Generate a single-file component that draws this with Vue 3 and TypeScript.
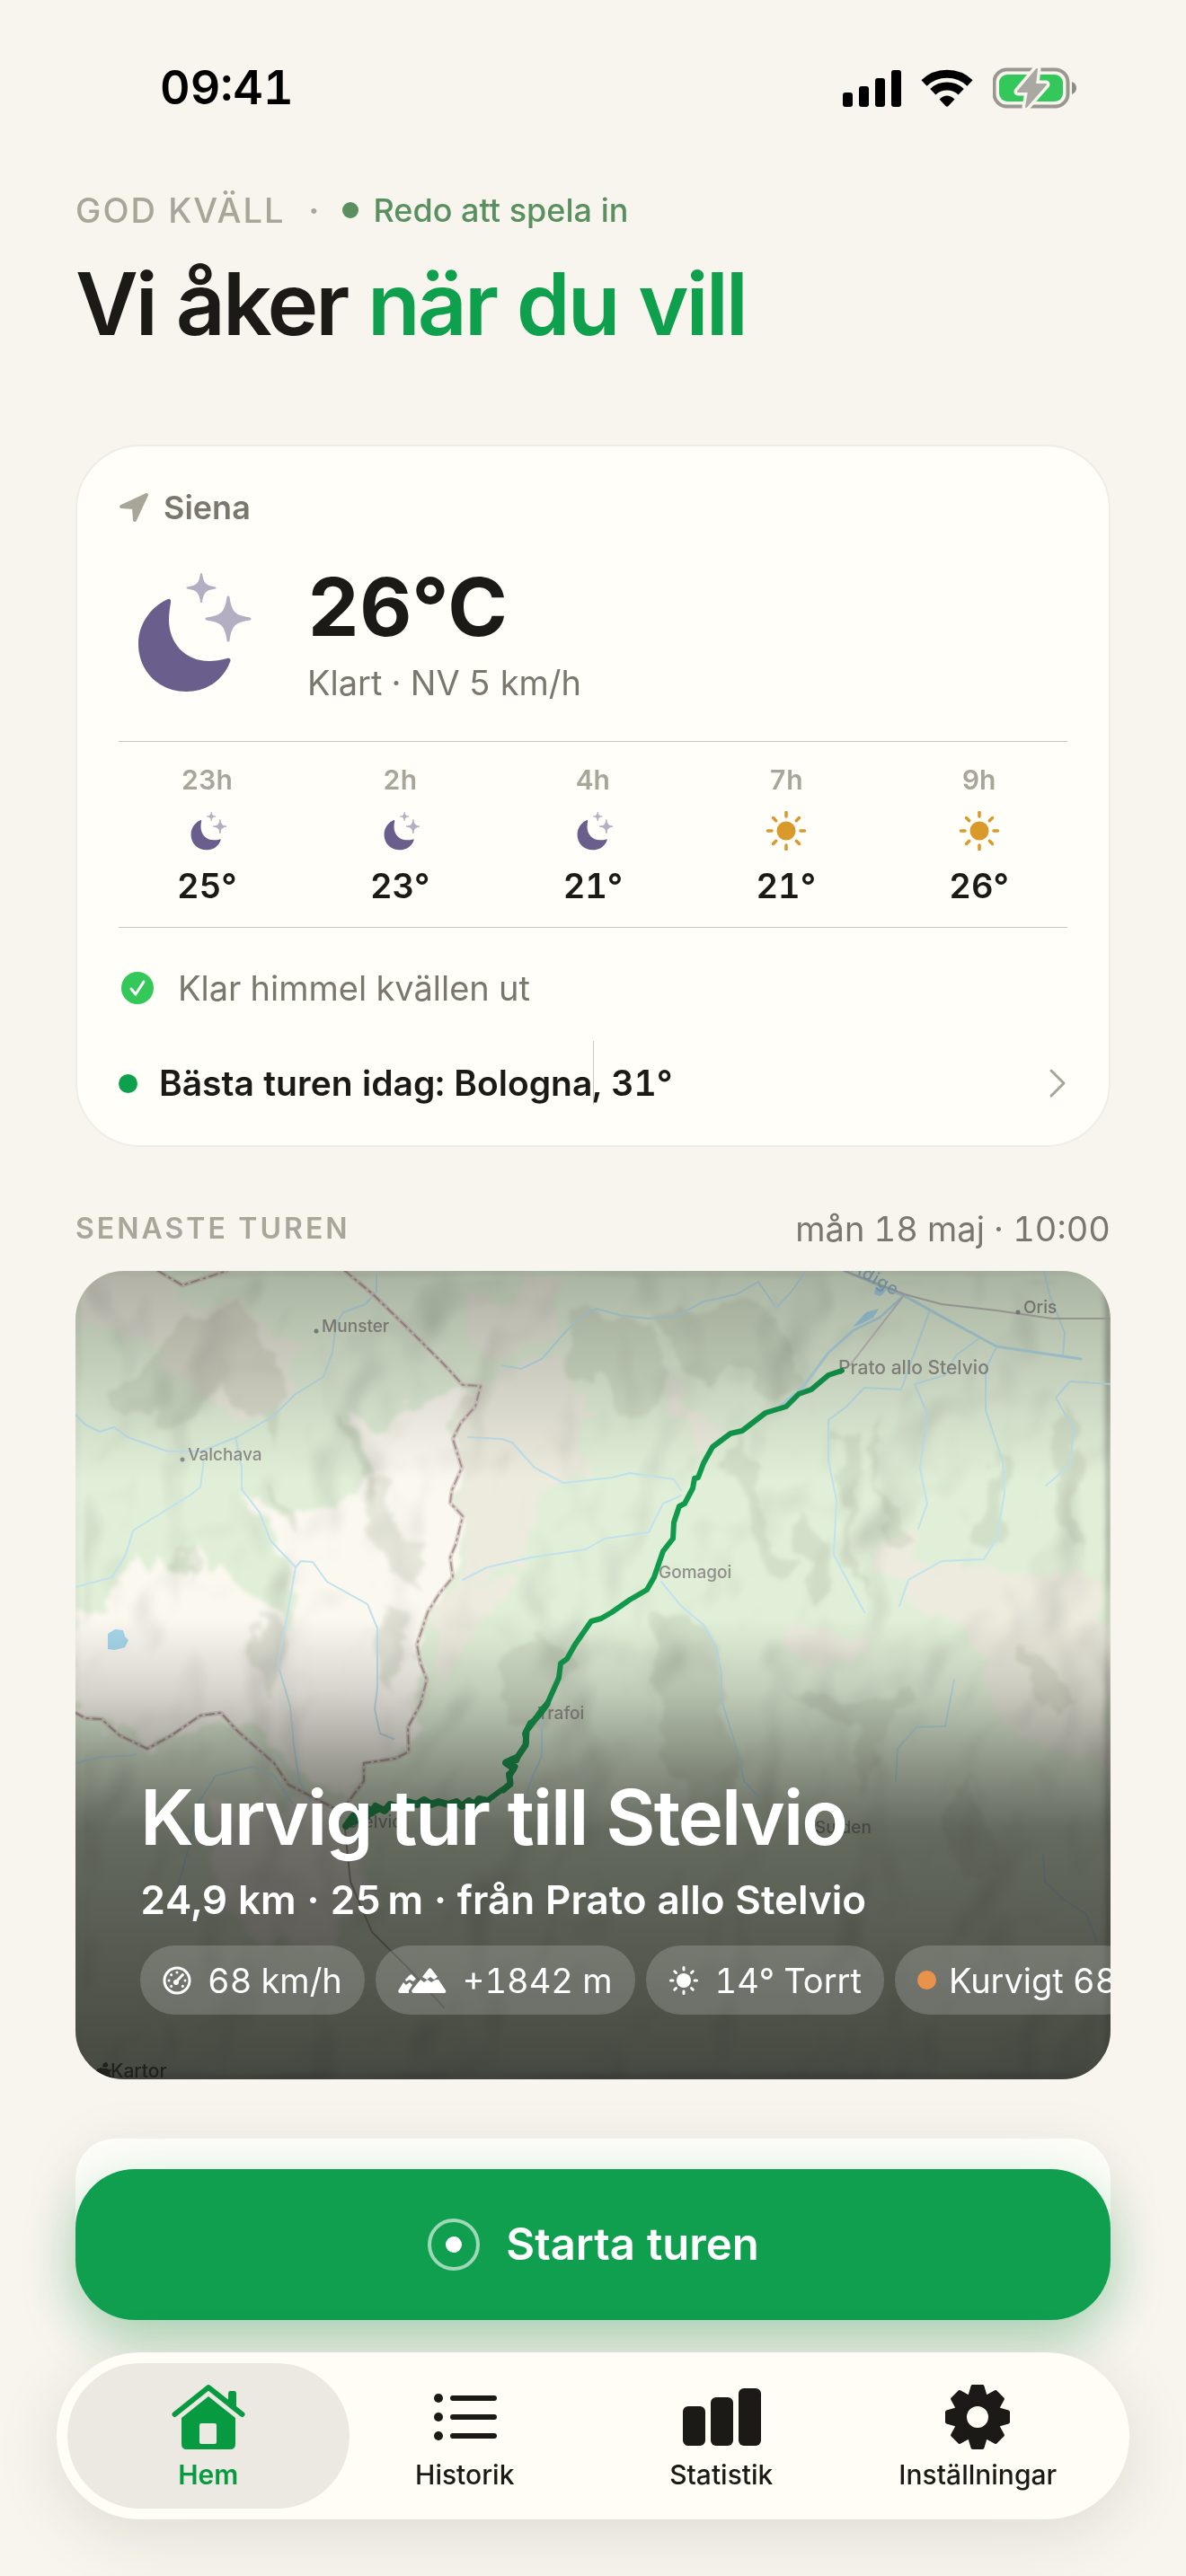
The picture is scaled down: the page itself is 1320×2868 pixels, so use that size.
<script setup lang="ts">
interface Hour {
  label: string
  night: boolean
  temp: string
}

interface Place {
  name: string
  x: number
  y: number
  dot?: boolean
  town?: boolean
}

const hours: Hour[] = [
  { label: '23h', night: true, temp: '25°' },
  { label: '2h', night: true, temp: '23°' },
  { label: '4h', night: true, temp: '21°' },
  { label: '7h', night: false, temp: '21°' },
  { label: '9h', night: false, temp: '26°' },
]

const eighths: number[] = [0, 45, 90, 135, 180, 225, 270, 315]

const places: Place[] = [
  { name: 'Munster', x: 274, y: 68, dot: true },
  { name: 'Valchava', x: 125, y: 211, dot: true },
  { name: 'Oris', x: 1055, y: 47, dot: true },
  { name: 'Prato allo Stelvio', x: 849, y: 115, town: true },
  { name: 'Gomagoi', x: 649, y: 342 },
  { name: 'Trafoi', x: 514, y: 499 },
  { name: 'Stelvio', x: 302, y: 620 },
  { name: 'Sulden', x: 823, y: 626 },
]

const rivers: string[] = [
  '0,160 11,171 27,179 43,174 58,185 103,201 139,201 180,185 221,161 245,137 276,118 286,91 290,59 298,46 323,37 335,23 335,0',
  '143,209 139,241 127,250 90,273 64,289 56,316 41,341 0,352',
  '178,185 185,219 185,243 205,269 217,300 245,330 235,387 225,437 239,485 243,528 249,568 262,590',
  '245,330 251,323 264,324 280,346 325,371 336,398 336,465 333,488 339,515 354,521',
  '474,105 496,109 519,98 547,66 568,48 580,42 609,50 638,53 670,50 699,34 736,26 760,12 780,41 797,23 813,0',
  '437,185 474,187 486,191 511,219 543,236 597,230 617,225 666,232 674,244',
  '431,344 458,330 507,319 568,310 589,298 638,291 654,259 674,250',
  '652,346 674,373 699,394 713,419 719,448 719,478 736,532 744,568 760,585',
  '950,46 919,132 878,130 858,151 838,166 838,212 847,255 844,316 878,380',
  '1005,76 980,94 968,116 934,126 948,159 940,219 948,259 938,287',
  '1025,85 1013,109 1013,155 1032,212 1034,248 1025,298 1011,321 964,323 927,344 917,373',
  '1078,0 1084,26 1101,69 1099,94',
  '1152,126 1107,123 1091,141 1111,176 1107,216 1080,239',
  '978,455 968,507 936,508 915,532 913,568',
  '115,682 127,638 135,595 156,562 196,552 221,562 241,592',
  '0,548 29,541 60,540 67,538',
  '519,500 519,540 505,572 500,600',
  '1077,650 1079,680 1100,700 1125,716 1137,748',
]

const borders: string[] = [
  '300,0 331,26 368,62 411,105 431,127 451,128 445,151 429,169 420,187 430,219 419,244 417,258 431,273 423,305 417,319 420,341 405,359 392,380 380,416 384,437 391,455 384,482 370,508 371,535 356,543 321,548 321,568 303,592',
  '0,492 11,498 29,499 49,517 80,532 107,517 139,495 162,492 180,512 221,548 237,572 286,597',
  '92,0 119,16 168,0',
]

const creamAreas: string[] = [
  '400,134 451,134 420,187 429,226 417,262 429,276 419,341 392,384 380,423 392,465 371,535 321,548 303,592 225,540 200,500 162,492 80,532 0,492 0,380 30,372 60,320 80,345 98,310 120,340 124,300 140,332 165,330 180,350 236,400 246,332 217,300 205,269 190,245 226,270 262,262 310,244 335,226 322,196 304,160 340,172',
  '150,590 290,600 330,700 260,760 160,720',
]

const sandAreas: string[] = [
  '451,130 474,110 520,104 545,100 556,140 580,150 562,200 560,228 520,250 512,290 490,330 430,345 427,270 420,200',
  '430,20 474,40 500,10 540,0 520,80 470,100 440,84',
  '790,392 850,402 884,404 872,440 820,436 786,416',
  '655,120 690,150 716,184 690,200 664,156',
  '400,370 440,344 486,350 470,380 430,420 400,470',
  '150,40 250,80 230,150 190,170 150,120',
  '0,0 96,0 120,30 190,40 200,100 190,150 150,150 110,110 70,70 0,62',
  '880,320 900,296 936,284 930,320 980,330 1090,340 1152,350 1152,560 1040,520 1010,440 980,400 940,372',
]

const shadeAreas: string[] = [
  '40,140 110,60 180,40 230,110 220,190 170,120 120,180',
  '283,160 310,170 322,210 340,236 334,262 312,220 300,190',
  '216,236 236,250 256,290 250,300 228,268',
  '322,244 348,226 356,280 396,320 384,356 330,300',
  '120,300 130,320 124,350 112,330',
  '545,40 640,60 660,120 620,180 580,110 550,130',
  '640,50 760,30 790,70 810,140 780,140 730,100 700,130',
  '740,170 760,260 800,330 780,350 750,280 728,210',
  '844,180 870,172 866,300 884,360 860,330',
  '880,200 900,170 896,240 930,300 910,300',
  '1020,230 1034,200 1032,310 1000,290',
  '1090,150 1120,180 1112,300 1130,330 1096,280',
  '800,260 830,290 850,350 820,370 806,310',
  '470,430 520,400 560,440 520,500 480,510',
  '640,380 700,400 740,540 700,640 650,520',
  '790,470 860,480 930,470 900,520 880,590 860,560 870,510',
  '200,390 232,400 222,480 196,440',
  '340,380 372,400 352,470 338,460',
  '1050,410 1090,440 1110,490 1084,500',
  '960,620 1000,560 1020,660 980,680',
]
</script>

<template>
  <div class="page">
    <header class="status">
      <span class="clock">09:41</span>
      <div class="status-icons">
        <svg width="65" height="42" viewBox="0 0 65 42" aria-hidden="true">
          <rect x="0" y="26" width="11" height="16" rx="3" />
          <rect x="18" y="19" width="11" height="23" rx="3" />
          <rect x="36" y="10" width="11" height="32" rx="3" />
          <rect x="54" y="1" width="11" height="41" rx="3" />
        </svg>
        <svg width="58" height="43" viewBox="0 0 58 43" aria-hidden="true">
          <path d="M3.5 15.500a37 37 0 0 1 51 0" fill="none" stroke="#000" stroke-width="9" />
          <path d="M13.300 25.300a23 23 0 0 1 31.400 0" fill="none" stroke="#000" stroke-width="9" />
          <path d="M20.500 33.500q8.500-8 17 0L30.500 41q-1.500 1.600-3 0Z" />
        </svg>
        <svg width="94" height="46" viewBox="0 0 94 46" aria-hidden="true">
          <rect x="1.500" y="2.500" width="82" height="41" rx="14" fill="none" stroke="#999790" stroke-width="4" />
          <rect x="7" y="8" width="71" height="30" rx="9" fill="#34c759" />
          <path d="M88 16q5 2 5 7t-5 7Z" fill="#8d8b86" />
          <path d="M49 2 28 27h12l-3 17 22-25H47Z" fill="#a9a8a3" stroke="#f8f5ee" stroke-width="9" stroke-linejoin="round" />
          <path d="M49 2 28 27h12l-3 17 22-25H47Z" fill="#a9a8a3" stroke="#a9a8a3" stroke-width="2" stroke-linejoin="round" />
        </svg>
      </div>
    </header>

    <main class="content">
      <div class="eyebrow">
        <span class="greeting">GOD KVÄLL</span>
        <span class="separator">·</span>
        <span class="ready"><i class="ready-dot"></i>Redo att spela in</span>
      </div>
      <h1>Vi åker <em>när du vill</em></h1>

      <section class="weather">
        <div class="place">
          <svg width="34" height="34" viewBox="0 0 34 34" aria-hidden="true">
            <path d="M31 3 18 31l-1-14L3 16Z" fill="#a8a599" stroke="#a8a599" stroke-width="4" stroke-linejoin="round" />
          </svg>
          <span>Siena</span>
        </div>

        <div class="current">
          <svg width="156" height="160" viewBox="0 0 156 160" aria-hidden="true">
            <g id="moon">
              <path d="M55 41C41 47 22 64 22 91c0 30 23 53 53 53 24 0 42-14 49-33 1.500-3-.5-5-3-4-7 2-14 3-20 3-28 0-45-21-45-46 0-7 1-13 2-19 .5-3-1-5-3-4Z" fill="#6a5f8c" />
              <path d="M92 13c1.500 11 4.500 14 15.500 15.500C96.500 30 93.500 33 92 44c-1.500-11-4.500-14-15.500-15.500C87.500 27 90.500 24 92 13Z" fill="#b3aec1" stroke="#b3aec1" stroke-width="2" stroke-linejoin="round" />
              <path d="M122 39c2 17 7 22 24 24-17 2-22 7-24 24-2-17-7-22-24-24 17-2 22-7 24-24Z" fill="#b3aec1" stroke="#b3aec1" stroke-width="3" stroke-linejoin="round" />
            </g>
          </svg>
          <div>
            <p class="temperature">26°C</p>
            <p class="condition">Klart · NV 5 km/h</p>
          </div>
        </div>

        <ul class="hours">
          <li v-for="hour in hours" :key="hour.label">
            <span class="hour-label">{{ hour.label }}</span>
            <svg v-if="hour.night" width="44" height="44" viewBox="8 10 136 136" aria-hidden="true">
              <use href="#moon" />
            </svg>
            <svg v-else width="46" height="44" viewBox="-23 -22 46 44" aria-hidden="true">
              <circle r="10.500" fill="#d99a2b" />
              <path v-for="angle in eighths" :key="angle" d="M0-16v-4.500" :transform="`rotate(${angle})`" stroke="#d99a2b" stroke-width="3.500" stroke-linecap="round" />
            </svg>
            <span class="hour-temp">{{ hour.temp }}</span>
          </li>
        </ul>

        <p class="note">
          <svg width="42" height="42" viewBox="0 0 42 42" aria-hidden="true">
            <circle cx="21" cy="21" r="18" fill="#34c759" />
            <path d="m14 22 5 6 9-14" fill="none" stroke="#fff" stroke-width="3" stroke-linecap="round" stroke-linejoin="round" />
          </svg>
          <span>Klar himmel kvällen ut</span>
        </p>

        <button class="best" type="button">
          <i class="best-dot"></i>
          <span>Bästa turen idag: Bologna, 31°</span>
          <svg width="22" height="34" viewBox="0 0 22 34" aria-hidden="true">
            <path d="m4 3 14 14L4 31" fill="none" stroke="#a8a599" stroke-width="3" stroke-linecap="round" stroke-linejoin="round" />
          </svg>
        </button>
      </section>

      <div class="section-head">
        <h2>SENASTE TUREN</h2>
        <time>mån 18 maj · 10:00</time>
      </div>

      <article class="trip">
        <svg class="map" viewBox="0 0 1152 900" preserveAspectRatio="xMidYMid slice" aria-hidden="true">
          <defs>
            <filter id="soften" x="-5%" y="-5%" width="110%" height="110%">
              <feTurbulence type="fractalNoise" baseFrequency="0.025" numOctaves="3" seed="4" />
              <feDisplacementMap in="SourceGraphic" scale="44" xChannelSelector="R" yChannelSelector="G" />
              <feGaussianBlur stdDeviation="2" />
            </filter>
            <filter id="relief" x="0" y="0" width="100%" height="100%">
              <feTurbulence type="fractalNoise" baseFrequency="0.009 0.007" numOctaves="3" seed="12" />
              <feColorMatrix values="0 0 0 0 0  0 0 0 0 0  0 0 0 0 0  1 0 0 0 0" />
              <feGaussianBlur stdDeviation="4" />
              <feDiffuseLighting surfaceScale="36" diffuseConstant="1.150" lighting-color="#fff">
                <feDistantLight azimuth="215" elevation="62" />
              </feDiffuseLighting>
              <feGaussianBlur stdDeviation="2" />
            </filter>
            <linearGradient id="shade" x1="0" y1="0" x2="0" y2="1">
              <stop offset="0" stop-color="#1a1a16" stop-opacity=".28" />
              <stop offset=".11" stop-color="#1a1a16" stop-opacity=".16" />
              <stop offset=".26" stop-color="#1a1a16" stop-opacity="0" />
              <stop offset=".43" stop-color="#1a1a16" stop-opacity="0" />
              <stop offset=".52" stop-color="#1a1a16" stop-opacity=".16" />
              <stop offset=".61" stop-color="#1a1a16" stop-opacity=".42" />
              <stop offset=".69" stop-color="#1a1a16" stop-opacity=".62" />
              <stop offset="1" stop-color="#1a1a16" stop-opacity=".78" />
            </linearGradient>
          </defs>
          <rect width="1152" height="900" fill="#e1efd8" />
          <g filter="url(#soften)">
            <polygon v-for="area in sandAreas" :key="area" :points="area" fill="#ecebde" />
            <polygon v-for="area in creamAreas" :key="area" :points="area" fill="#faf8ef" />
            <polygon v-for="area in shadeAreas" :key="area" :points="area" fill="#aab29c" opacity=".25" />
          </g>
          <rect class="relief" width="1152" height="900" filter="url(#relief)" />
          <g fill="#a5d5ea">
            <path d="m36 404 8-5 9 1 2 7 4 4-4 8-7 2-5 1-7-1Z" />
            <path d="m890 20 8-3 4 5-6 6-7-2Zm-10 26 14-4-6 10-16 8-7 2Z" />
          </g>
          <g fill="none" stroke-linejoin="round" stroke-linecap="round">
            <polyline v-for="river in rivers" :key="river" :points="river" stroke="#bfe2ec" stroke-width="2" />
            <polyline points="856,0 923,28 968,53 1025,84 1078,92 1119,98" stroke="#b2d9e6" stroke-width="3" />
            <polyline points="919,30 895,52 866,66 838,91 809,130 785,150" stroke="#b2d9e6" stroke-width="3" />
            <polyline points="856,0 923,26 964,37 1025,44 1087,53 1152,53" stroke="#b8b6b3" stroke-width="2" />
            <polyline points="923,26 862,105" stroke="#c4c0c4" stroke-width="2" />
            <polyline points="300,622 306,680 330,736 372,778 410,820" stroke="#a89c90" stroke-width="2" />
            <g v-for="border in borders" :key="border">
              <polyline :points="border" stroke="#cfbdba" stroke-width="5" opacity=".6" />
              <polyline :points="border" stroke="#ab9795" stroke-width="2" stroke-dasharray="9 5 2 5" />
            </g>
          </g>
          <g class="map-labels">
            <template v-for="spot in places" :key="spot.name">
              <circle v-if="spot.dot" :cx="spot.x - 6" :cy="spot.y - 1" r="2.500" />
              <text :class="{ town: spot.town }" :x="spot.x" :y="spot.y">{{ spot.name }}</text>
            </template>
            <text class="water" x="912" y="28" text-anchor="end" transform="rotate(30 912 28)">Etsch/Adige</text>
          </g>
          <g fill="none" stroke="#0f9a4c" stroke-linejoin="round" stroke-linecap="round">
            <polyline points="853,111 838,116 819,132 805,137 791,151 768,158 742,178 729,181 709,196 699,214 693,230 689,231 687,242 678,259 672,262 666,280 665,298 654,312 644,341 636,355 617,366 597,380 585,387 574,390 556,416 547,432 540,437 538,453 525,482 519,488 511,500 506,503 500,515 502,525 494,538 491,545 478,548 488,555 482,560 484,572 474,578 458,590 441,592" stroke-width="6" />
            <polyline points="525,482 518,492 511,500 502,512 501,528 492,541 479,547 489,552 483,562 484,571 476,578" stroke-width="7" />
            <polyline points="458,590 449,588 444,595 438,590 430,596 424,591 415,594 404,591 396,594 388,589 380,594 370,591 360,597 350,594 344,601 334,596 330,603 324,598 324,608 316,602 318,612 309,607 301,618" stroke-width="8" />
            <polygon points="321,596 340,600 322,610 300,620 311,604" fill="#0f9a4c" stroke-width="3" />
          </g>
          <rect width="1152" height="900" fill="url(#shade)" />
          <g fill="#20201c">
            <path d="M36 886q1-4-2-5-4 1-4 5 3 1 6 0Zm1 3q-3-2-5-1-5-2-8 1-4 5 0 12 2 4 4 3l4-1 4 1q3 0 5-6-5-4-1-8-1-2-3-1Z" />
            <text class="maker" x="39" y="898">Kartor</text>
          </g>
        </svg>

        <div class="trip-body">
          <h3>Kurvig tur till Stelvio</h3>
          <p class="trip-meta">24,9 km · 25&#8201;m · från Prato allo Stelvio</p>
          <ul class="pills">
            <li>
              <svg width="32" height="32" viewBox="-16 -16 32 32" aria-hidden="true">
                <circle r="14" fill="none" stroke="#fff" stroke-width="3" />
                <circle v-for="angle in [0, 45, 90, 135, 225, 270, 315]" :key="angle" cy="-9" r="1.500" fill="#fff" :transform="`rotate(${angle})`" />
                <path d="M-1.500 2 6-6" stroke="#fff" stroke-width="3" stroke-linecap="round" />
                <circle cx="-1" cy="2" r="3" fill="#fff" />
              </svg>
              <span>68 km/h</span>
            </li>
            <li>
              <svg width="54" height="28" viewBox="0 0 54 28" aria-hidden="true">
                <path d="M34 1q1.500-1.500 3 0l7 9-4 3-4-3-4 3-5-3ZM25 13l4 3 4-3 4 3 5-3 3 0 8 12q1 2-1 3H17q-3-1-1-4Z" fill="#fff" />
                <path d="m13 8 2-1 5 5-3 3-4-2-4 2-1-2ZM6 16l3 3 4-3 3 3-4 6v3H2q-3-1-1-4Z" fill="#fff" />
              </svg>
              <span>+1842 m</span>
            </li>
            <li>
              <svg width="34" height="32" viewBox="-17 -16 34 32" aria-hidden="true">
                <circle r="8" fill="#fff" />
                <path v-for="angle in eighths" :key="angle" d="M0-12v-2.500" :transform="`rotate(${angle})`" stroke="#fff" stroke-width="3" stroke-linecap="round" />
              </svg>
              <span>14° Torrt</span>
            </li>
            <li class="curvy">
              <i class="curvy-dot"></i>
              <span>Kurvigt 68</span>
            </li>
          </ul>
        </div>
      </article>

      <div class="launch">
        <button class="start" type="button">
          <svg width="60" height="60" viewBox="0 0 60 60" aria-hidden="true">
            <circle cx="30" cy="30" r="27" fill="none" stroke="#fff" stroke-opacity=".6" stroke-width="4" />
            <circle cx="30" cy="30" r="9" fill="#fff" />
          </svg>
          <span>Starta turen</span>
        </button>
      </div>
    </main>

    <nav class="tabs">
      <button class="tab active" type="button" aria-current="page">
        <svg width="84" height="76" viewBox="0 0 84 76" aria-hidden="true">
          <path d="M4.500 35 42 5l37.500 30" fill="none" stroke="currentColor" stroke-width="6" stroke-linecap="round" stroke-linejoin="round" />
          <path d="M64 26V12q0-3 2.500-3h4q2.500 0 2.500 3v19Z" fill="currentColor" />
          <path fill-rule="evenodd" d="M42 15 72 39v29q0 6-6 6H18q-6 0-6-6V39ZM34 45q-2 0-2 2v19q0 2 2 2h15q2 0 2-2V47q0-2-2-2Z" fill="currentColor" />
        </svg>
        <span>Hem</span>
      </button>
      <button class="tab" type="button">
        <svg width="84" height="76" viewBox="0 0 84 76" aria-hidden="true">
          <g fill="currentColor">
            <circle cx="13" cy="17" r="5" />
            <circle cx="13" cy="38" r="5" />
            <circle cx="13" cy="59" r="5" />
          </g>
          <path d="M29 17h46M29 38h46M29 59h46" stroke="currentColor" stroke-width="6" stroke-linecap="round" />
        </svg>
        <span>Historik</span>
      </button>
      <button class="tab" type="button">
        <svg width="88" height="76" viewBox="0 0 88 76" aria-hidden="true">
          <g fill="currentColor">
            <rect x="1" y="26" width="25" height="44" rx="6" />
            <rect x="32" y="16" width="25" height="54" rx="6" />
            <rect x="63" y="6" width="25" height="64" rx="6" />
          </g>
        </svg>
        <span>Statistik</span>
      </button>
      <button class="tab" type="button">
        <svg width="84" height="76" viewBox="-42 -38 84 76" aria-hidden="true">
          <circle r="19.500" fill="none" stroke="currentColor" stroke-width="15" />
          <path v-for="angle in eighths" :key="angle" d="M-9-22-5.500-34h11L9-22Z" :transform="`rotate(${angle})`" fill="currentColor" stroke="currentColor" stroke-width="4" stroke-linejoin="round" />
        </svg>
        <span>Inställningar</span>
      </button>
    </nav>
  </div>
</template>

<style>
body {
  margin: 0;
  background: #f8f5ee;
}
</style>

<style scoped>
.page {
  min-height: 100vh;
  box-sizing: border-box;
  padding-bottom: 63px;
  background: #f8f5ee;
  color: #1c1a16;
  font-family: Inter, "Liberation Sans", sans-serif;
  font-variant-numeric: tabular-nums;
  overflow: hidden;
}

.page * {
  box-sizing: border-box;
}

h1,
h2,
h3,
p,
ul {
  margin: 0;
  padding: 0;
}

ul {
  list-style: none;
}

button {
  border: 0;
  padding: 0;
  background: none;
  color: inherit;
  font: inherit;
  font-variant-numeric: inherit;
}

svg {
  display: block;
  flex: none;
}

.status {
  display: flex;
  align-items: center;
  justify-content: space-between;
  padding: 68px 121px 0 178px;
}

.clock {
  color: #000;
  font-size: 52px;
  font-weight: 600;
  line-height: 60px;
}

.status-icons {
  display: flex;
  align-items: center;
  gap: 22px;
}

.content {
  padding: 82px 84px 0;
}

.eyebrow {
  display: flex;
  align-items: center;
  line-height: 48px;
}

.greeting {
  color: #a8a599;
  font-size: 38px;
  font-weight: 500;
  letter-spacing: 2px;
}

.separator {
  width: 64px;
  color: #a8a599;
  font-size: 38px;
  font-weight: 600;
  text-align: center;
}

.ready {
  display: flex;
  align-items: center;
  gap: 16px;
  color: #5a8f5f;
  font-size: 36px;
  font-weight: 500;
}

.ready-dot {
  width: 18px;
  height: 18px;
  border-radius: 50%;
  background: #5a8f5f;
}

h1 {
  margin-top: 20px;
  font-size: 96px;
  font-weight: 600;
  line-height: 120px;
  letter-spacing: -3px;
}

h1 em {
  color: #0fa04e;
  font-style: normal;
}

.weather {
  margin-top: 97px;
  padding: 46px 46px 45px;
  border: 2px solid #efede8;
  border-radius: 72px;
  background: #fffef8;
}

.place {
  display: flex;
  align-items: center;
  gap: 16px;
  color: #7a776e;
  font-size: 36px;
  font-weight: 600;
  line-height: 44px;
}

.current {
  display: flex;
  align-items: center;
  gap: 54px;
  padding: 39px 0;
}

.temperature {
  font-size: 90px;
  font-weight: 700;
  line-height: 96px;
}

.condition {
  margin-top: 12px;
  color: #7a776e;
  font-size: 38px;
  line-height: 48px;
}

.hours {
  display: grid;
  grid-template-columns: repeat(5, 1fr);
  gap: 18px;
  padding: 24px 0;
  border-top: 1px solid #c9c7c2;
  border-bottom: 1px solid #c9c7c2;
}

.hours li {
  display: flex;
  flex-direction: column;
  align-items: center;
  gap: 17px;
}

.hour-label {
  color: #a8a599;
  font-size: 30px;
  font-weight: 600;
  line-height: 36px;
}

.hour-temp {
  font-size: 38px;
  font-weight: 600;
  line-height: 44px;
}

.note {
  display: flex;
  align-items: center;
  gap: 24px;
  margin-top: 43px;
  color: #7a776e;
  font-size: 38px;
  line-height: 48px;
}

.best {
  position: relative;
  display: flex;
  align-items: center;
  gap: 24px;
  width: 100%;
  margin-top: 35px;
  padding-top: 23px;
  font-size: 39px;
  font-weight: 600;
  line-height: 48px;
  text-align: left;
}

.best::before {
  content: "";
  position: absolute;
  inset: 0 auto 0 50%;
  width: 1px;
  background: #c9c7c2;
}

.best span {
  position: relative;
  flex: 1;
}

.best-dot {
  width: 21px;
  height: 21px;
  border-radius: 50%;
  background: #0fa04e;
}

.section-head {
  display: flex;
  align-items: center;
  justify-content: space-between;
  margin: 67px 0 23px;
  line-height: 48px;
}

h2 {
  color: #a8a599;
  font-size: 32px;
  font-weight: 600;
  letter-spacing: 3px;
}

time {
  color: #7a776e;
  font-size: 38px;
}

.trip {
  position: relative;
  display: flex;
  flex-direction: column;
  justify-content: flex-end;
  aspect-ratio: 1152 / 900;
  border-radius: 54px;
  overflow: hidden;
}

.map {
  position: absolute;
  inset: 0;
  width: 100%;
  height: 100%;
}

.relief {
  mix-blend-mode: multiply;
  opacity: .32;
}

.map-labels {
  fill: #8f8e8a;
  font-size: 19px;
  font-weight: 500;
}

.map-labels .town {
  font-size: 21px;
}

.map-labels .water {
  fill: #8fb6c8;
  letter-spacing: 1px;
}

.maker {
  font-size: 21px;
  font-weight: 500;
}

.trip-body {
  position: relative;
  padding: 0 0 72px 72px;
  color: #fff;
}

h3 {
  font-size: 85px;
  font-weight: 600;
  line-height: 96px;
  letter-spacing: -2px;
}

.trip-meta {
  margin-top: 15px;
  font-size: 44px;
  font-weight: 600;
  line-height: 56px;
}

.pills {
  display: flex;
  gap: 12px;
  margin-top: 23px;
}

.pills li {
  display: flex;
  flex: none;
  align-items: center;
  gap: 18px;
  height: 77px;
  padding: 0 25px;
  border-radius: 38px;
  background: rgb(255 255 255 / 18%);
  font-size: 38px;
  line-height: 48px;
  white-space: nowrap;
}

.pills .curvy {
  gap: 14px;
}

.curvy-dot {
  width: 21px;
  height: 21px;
  border-radius: 50%;
  background: #e8924a;
}

.launch {
  margin-top: 66px;
  padding-top: 34px;
  border-radius: 44px 44px 66px 66px;
  background: #fefdf9;
  box-shadow: 0 8px 64px rgb(40 38 30 / 8%);
}

.start {
  display: flex;
  align-items: center;
  justify-content: center;
  gap: 28px;
  width: 100%;
  height: 168px;
  border-radius: 66px;
  background: #0f9f4e;
  box-shadow: 0 20px 60px rgb(15 159 78 / 32%);
  color: #fff;
  font-size: 49px;
  font-weight: 600;
  line-height: 60px;
}

.tabs {
  position: relative;
  display: grid;
  grid-template-columns: repeat(4, 1fr);
  margin: 36px 63px 0;
  padding: 12px 26px;
  border-radius: 93px;
  background: #fffdf6;
  box-shadow: 0 16px 72px rgb(40 38 30 / 12%);
}

.tab {
  display: flex;
  flex-direction: column;
  align-items: center;
  gap: 8px;
  height: 162px;
  margin: 0 -14px;
  padding-top: 22px;
  border-radius: 81px;
  font-size: 30px;
  font-weight: 500;
  line-height: 36px;
}

.tab.active {
  background: #ebe9e2;
  color: #079a40;
  font-weight: 600;
}
</style>
